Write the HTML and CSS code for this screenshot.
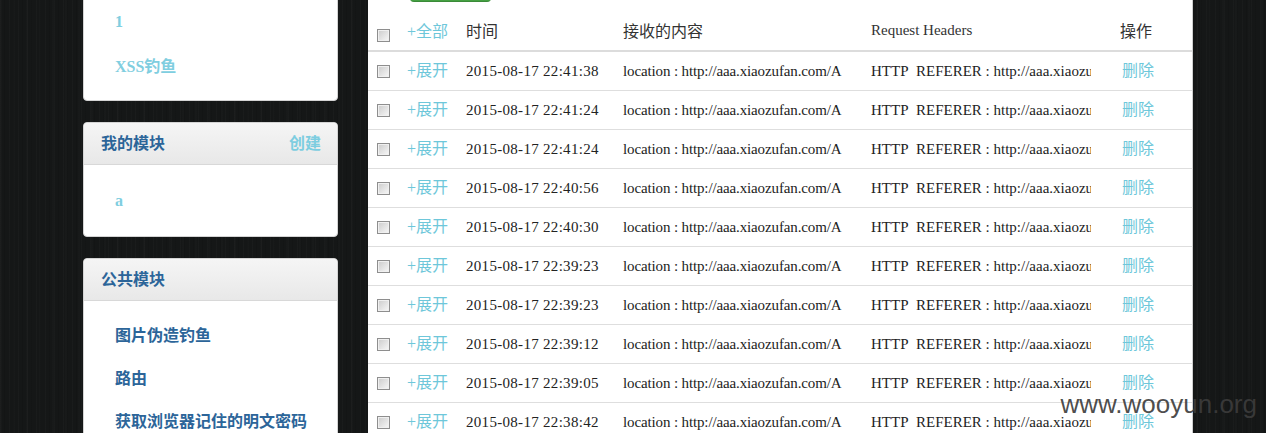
FILE: index.html
```html
<!DOCTYPE html>
<html lang="zh-CN">
<head>
<meta charset="utf-8">
<title>XSS Platform</title>
<link rel="stylesheet" href="styles.css">
</head>
<body>
<div class="page">
  <aside class="sidebar">
    <section class="card">
      <header class="card-head"><h3 class="card-title">我的项目</h3><a class="card-action" href="#">创建</a></header>
      <ul class="card-list visited">
        <li><a href="#">1</a></li>
        <li><a href="#">XSS钓鱼</a></li>
      </ul>
    </section>
    <section class="card">
      <header class="card-head"><h3 class="card-title">我的模块</h3><a class="card-action" href="#">创建</a></header>
      <ul class="card-list visited">
        <li><a href="#">a</a></li>
      </ul>
    </section>
    <section class="card">
      <header class="card-head"><h3 class="card-title">公共模块</h3></header>
      <ul class="card-list zh-list">
        <li><a href="#">图片伪造钓鱼</a></li>
        <li><a href="#">路由</a></li>
        <li><a href="#">获取浏览器记住的明文密码</a></li>
      </ul>
    </section>
  </aside>

  <main class="panel">
    <div class="toolbar"><a class="btn-green" href="#">删除所有</a></div>
    <table class="log">
      <colgroup>
        <col class="c-check"><col class="c-expand"><col class="c-time"><col class="c-content"><col class="c-headers"><col class="c-op">
      </colgroup>
      <thead>
        <tr>
          <th class="cell-check head-check"><input type="checkbox" class="chk"></th>
          <th><a class="lnk zh" href="#">+全部</a></th>
          <th class="zh">时间</th>
          <th class="zh">接收的内容</th>
          <th>Request Headers</th>
          <th class="zh">操作</th>
        </tr>
      </thead>
      <tbody>
        <tr><td class="cell-check"><input type="checkbox" class="chk"></td><td><a class="lnk zh lift" href="#">+展开</a></td><td class="time">2015-08-17 22:41:38</td><td><div class="clip content">location : http://aaa.xiaozufan.com/A</div></td><td><div class="clip">HTTP&nbsp; REFERER : http://aaa.xiaozu</div></td><td><a class="lnk zh lift del" href="#">删除</a></td></tr>
        <tr><td class="cell-check"><input type="checkbox" class="chk"></td><td><a class="lnk zh lift" href="#">+展开</a></td><td class="time">2015-08-17 22:41:24</td><td><div class="clip content">location : http://aaa.xiaozufan.com/A</div></td><td><div class="clip">HTTP&nbsp; REFERER : http://aaa.xiaozu</div></td><td><a class="lnk zh lift del" href="#">删除</a></td></tr>
        <tr><td class="cell-check"><input type="checkbox" class="chk"></td><td><a class="lnk zh lift" href="#">+展开</a></td><td class="time">2015-08-17 22:41:24</td><td><div class="clip content">location : http://aaa.xiaozufan.com/A</div></td><td><div class="clip">HTTP&nbsp; REFERER : http://aaa.xiaozu</div></td><td><a class="lnk zh lift del" href="#">删除</a></td></tr>
        <tr><td class="cell-check"><input type="checkbox" class="chk"></td><td><a class="lnk zh lift" href="#">+展开</a></td><td class="time">2015-08-17 22:40:56</td><td><div class="clip content">location : http://aaa.xiaozufan.com/A</div></td><td><div class="clip">HTTP&nbsp; REFERER : http://aaa.xiaozu</div></td><td><a class="lnk zh lift del" href="#">删除</a></td></tr>
        <tr><td class="cell-check"><input type="checkbox" class="chk"></td><td><a class="lnk zh lift" href="#">+展开</a></td><td class="time">2015-08-17 22:40:30</td><td><div class="clip content">location : http://aaa.xiaozufan.com/A</div></td><td><div class="clip">HTTP&nbsp; REFERER : http://aaa.xiaozu</div></td><td><a class="lnk zh lift del" href="#">删除</a></td></tr>
        <tr><td class="cell-check"><input type="checkbox" class="chk"></td><td><a class="lnk zh lift" href="#">+展开</a></td><td class="time">2015-08-17 22:39:23</td><td><div class="clip content">location : http://aaa.xiaozufan.com/A</div></td><td><div class="clip">HTTP&nbsp; REFERER : http://aaa.xiaozu</div></td><td><a class="lnk zh lift del" href="#">删除</a></td></tr>
        <tr><td class="cell-check"><input type="checkbox" class="chk"></td><td><a class="lnk zh lift" href="#">+展开</a></td><td class="time">2015-08-17 22:39:23</td><td><div class="clip content">location : http://aaa.xiaozufan.com/A</div></td><td><div class="clip">HTTP&nbsp; REFERER : http://aaa.xiaozu</div></td><td><a class="lnk zh lift del" href="#">删除</a></td></tr>
        <tr><td class="cell-check"><input type="checkbox" class="chk"></td><td><a class="lnk zh lift" href="#">+展开</a></td><td class="time">2015-08-17 22:39:12</td><td><div class="clip content">location : http://aaa.xiaozufan.com/A</div></td><td><div class="clip">HTTP&nbsp; REFERER : http://aaa.xiaozu</div></td><td><a class="lnk zh lift del" href="#">删除</a></td></tr>
        <tr><td class="cell-check"><input type="checkbox" class="chk"></td><td><a class="lnk zh lift" href="#">+展开</a></td><td class="time">2015-08-17 22:39:05</td><td><div class="clip content">location : http://aaa.xiaozufan.com/A</div></td><td><div class="clip">HTTP&nbsp; REFERER : http://aaa.xiaozu</div></td><td><a class="lnk zh lift del" href="#">删除</a></td></tr>
        <tr><td class="cell-check"><input type="checkbox" class="chk"></td><td><a class="lnk zh lift" href="#">+展开</a></td><td class="time">2015-08-17 22:38:42</td><td><div class="clip content">location : http://aaa.xiaozufan.com/A</div></td><td><div class="clip">HTTP&nbsp; REFERER : http://aaa.xiaozu</div></td><td><a class="lnk zh lift del" href="#">删除</a></td></tr>
      </tbody>
    </table>
  </main>
</div>
<div class="watermark">www.wooyun.org</div>
</body>
</html>
```

FILE: styles.css
```css
html, body {
  margin: 0;
  padding: 0;
  height: 100%;
  overflow: hidden;
}
body {
  background-color: #151717;
  background-image:
    repeating-linear-gradient(90deg, rgba(255,255,255,0.018) 0 1px, transparent 1px 4px, rgba(0,0,0,0.08) 4px 5px, transparent 5px 9px),
    repeating-linear-gradient(90deg, rgba(255,255,255,0.012) 0 2px, transparent 2px 13px);
  font-family: "Liberation Serif", "Noto Sans CJK SC", serif;
  color: #222;
}
.page {
  display: flex;
  align-items: flex-start;
  gap: 30px;
  padding-left: 83px;
  margin-top: -57px;
}
.sidebar {
  width: 255px;
  flex: none;
  display: flex;
  flex-direction: column;
  gap: 21px;
}
.card {
  background: #fff;
  border: 1px solid #d4d4d4;
  border-radius: 4px;
  box-sizing: border-box;
}
.card-head {
  height: 42px;
  box-sizing: border-box;
  display: flex;
  align-items: center;
  justify-content: space-between;
  padding: 0 16px 3px 17px;
  background: linear-gradient(#f5f5f5, #e8e8e8);
  border-bottom: 1px solid #d8d8d8;
  border-radius: 4px 4px 0 0;
}
.card-title {
  margin: 0;
  font-size: 16px;
  font-weight: bold;
  color: #2c6599;
}
.card-action {
  font-size: 16px;
  font-weight: bold;
  color: #7dcde0;
  text-decoration: none;
}
.card-list {
  list-style: none;
  margin: 0;
  padding: 14px 0;
}
.card-list li {
  height: 43px;
  box-sizing: border-box;
  display: flex;
  align-items: center;
  padding-left: 31px;
}
.zh-list li {
  padding-bottom: 5px;
}
.card-list a {
  font-size: 16px;
  font-weight: bold;
  color: #2c6599;
  text-decoration: none;
}
.card-list.visited a {
  color: #80cee0;
}

.panel {
  width: 825px;
  flex: none;
  background: #fff;
  box-sizing: border-box;
  padding-top: 19px;
  border-right: 1px solid #cfcfcf;
}
.toolbar {
  height: 40px;
  padding-left: 42px;
  margin-bottom: 10px;
}
.btn-green {
  display: block;
  width: 81px;
  height: 40px;
  box-sizing: border-box;
  border-radius: 4px;
  background: #45a043;
  border-bottom: 1px solid #3a8a38;
  color: #fff;
  font-size: 14px;
  line-height: 38px;
  text-align: center;
  text-decoration: none;
}
.log {
  width: 824px;
  table-layout: fixed;
  border-collapse: separate;
  border-spacing: 0;
  font-size: 15px;
}
.c-check { width: 39px; }
.c-expand { width: 59px; }
.c-time { width: 157px; }
.c-content { width: 248px; }
.c-headers { width: 249px; }
.c-op { width: 72px; }
.log th, .log td {
  padding: 0;
  text-align: left;
  white-space: nowrap;
  overflow: hidden;
  vertical-align: middle;
}
.log th {
  height: 36px;
  padding-bottom: 2px;
  font-weight: normal;
  color: #333;
  border-bottom: 2px solid #dcdcdc;
}
.log td {
  height: 38px;
  border-bottom: 1px solid #dedede;
}
.cell-check {
  padding-left: 9px !important;
}
.head-check {
  vertical-align: bottom !important;
  padding-bottom: 0 !important;
  height: 38px !important;
}
.head-check .chk {
  margin-bottom: 8px;
}
.chk {
  -webkit-appearance: none;
  appearance: none;
  display: block;
  margin: 0;
  width: 13px;
  height: 13px;
  box-sizing: border-box;
  border: 1px solid #8e8e8e;
  background: linear-gradient(135deg, #cbcbcb, #f8f8f8);
  box-shadow: inset 0 0 0 1px #f0f0f0;
}
.zh {
  font-size: 16px;
}
.lnk {
  color: #6ec7da;
  text-decoration: none;
}
.lift {
  display: inline-block;
  margin-bottom: 4px;
}
.del {
  padding-left: 2px;
}
.time {
  letter-spacing: 0.3px;
  color: #222;
}
.clip {
  width: 220px;
  overflow: hidden;
  white-space: nowrap;
}
.content {
  letter-spacing: -0.13px;
}
.watermark {
  position: absolute;
  right: 9px;
  bottom: 16px;
  font-family: "Liberation Sans", Arial, sans-serif;
  font-size: 26px;
  color: rgba(60, 60, 60, 0.92);
  line-height: 1;
}
```
